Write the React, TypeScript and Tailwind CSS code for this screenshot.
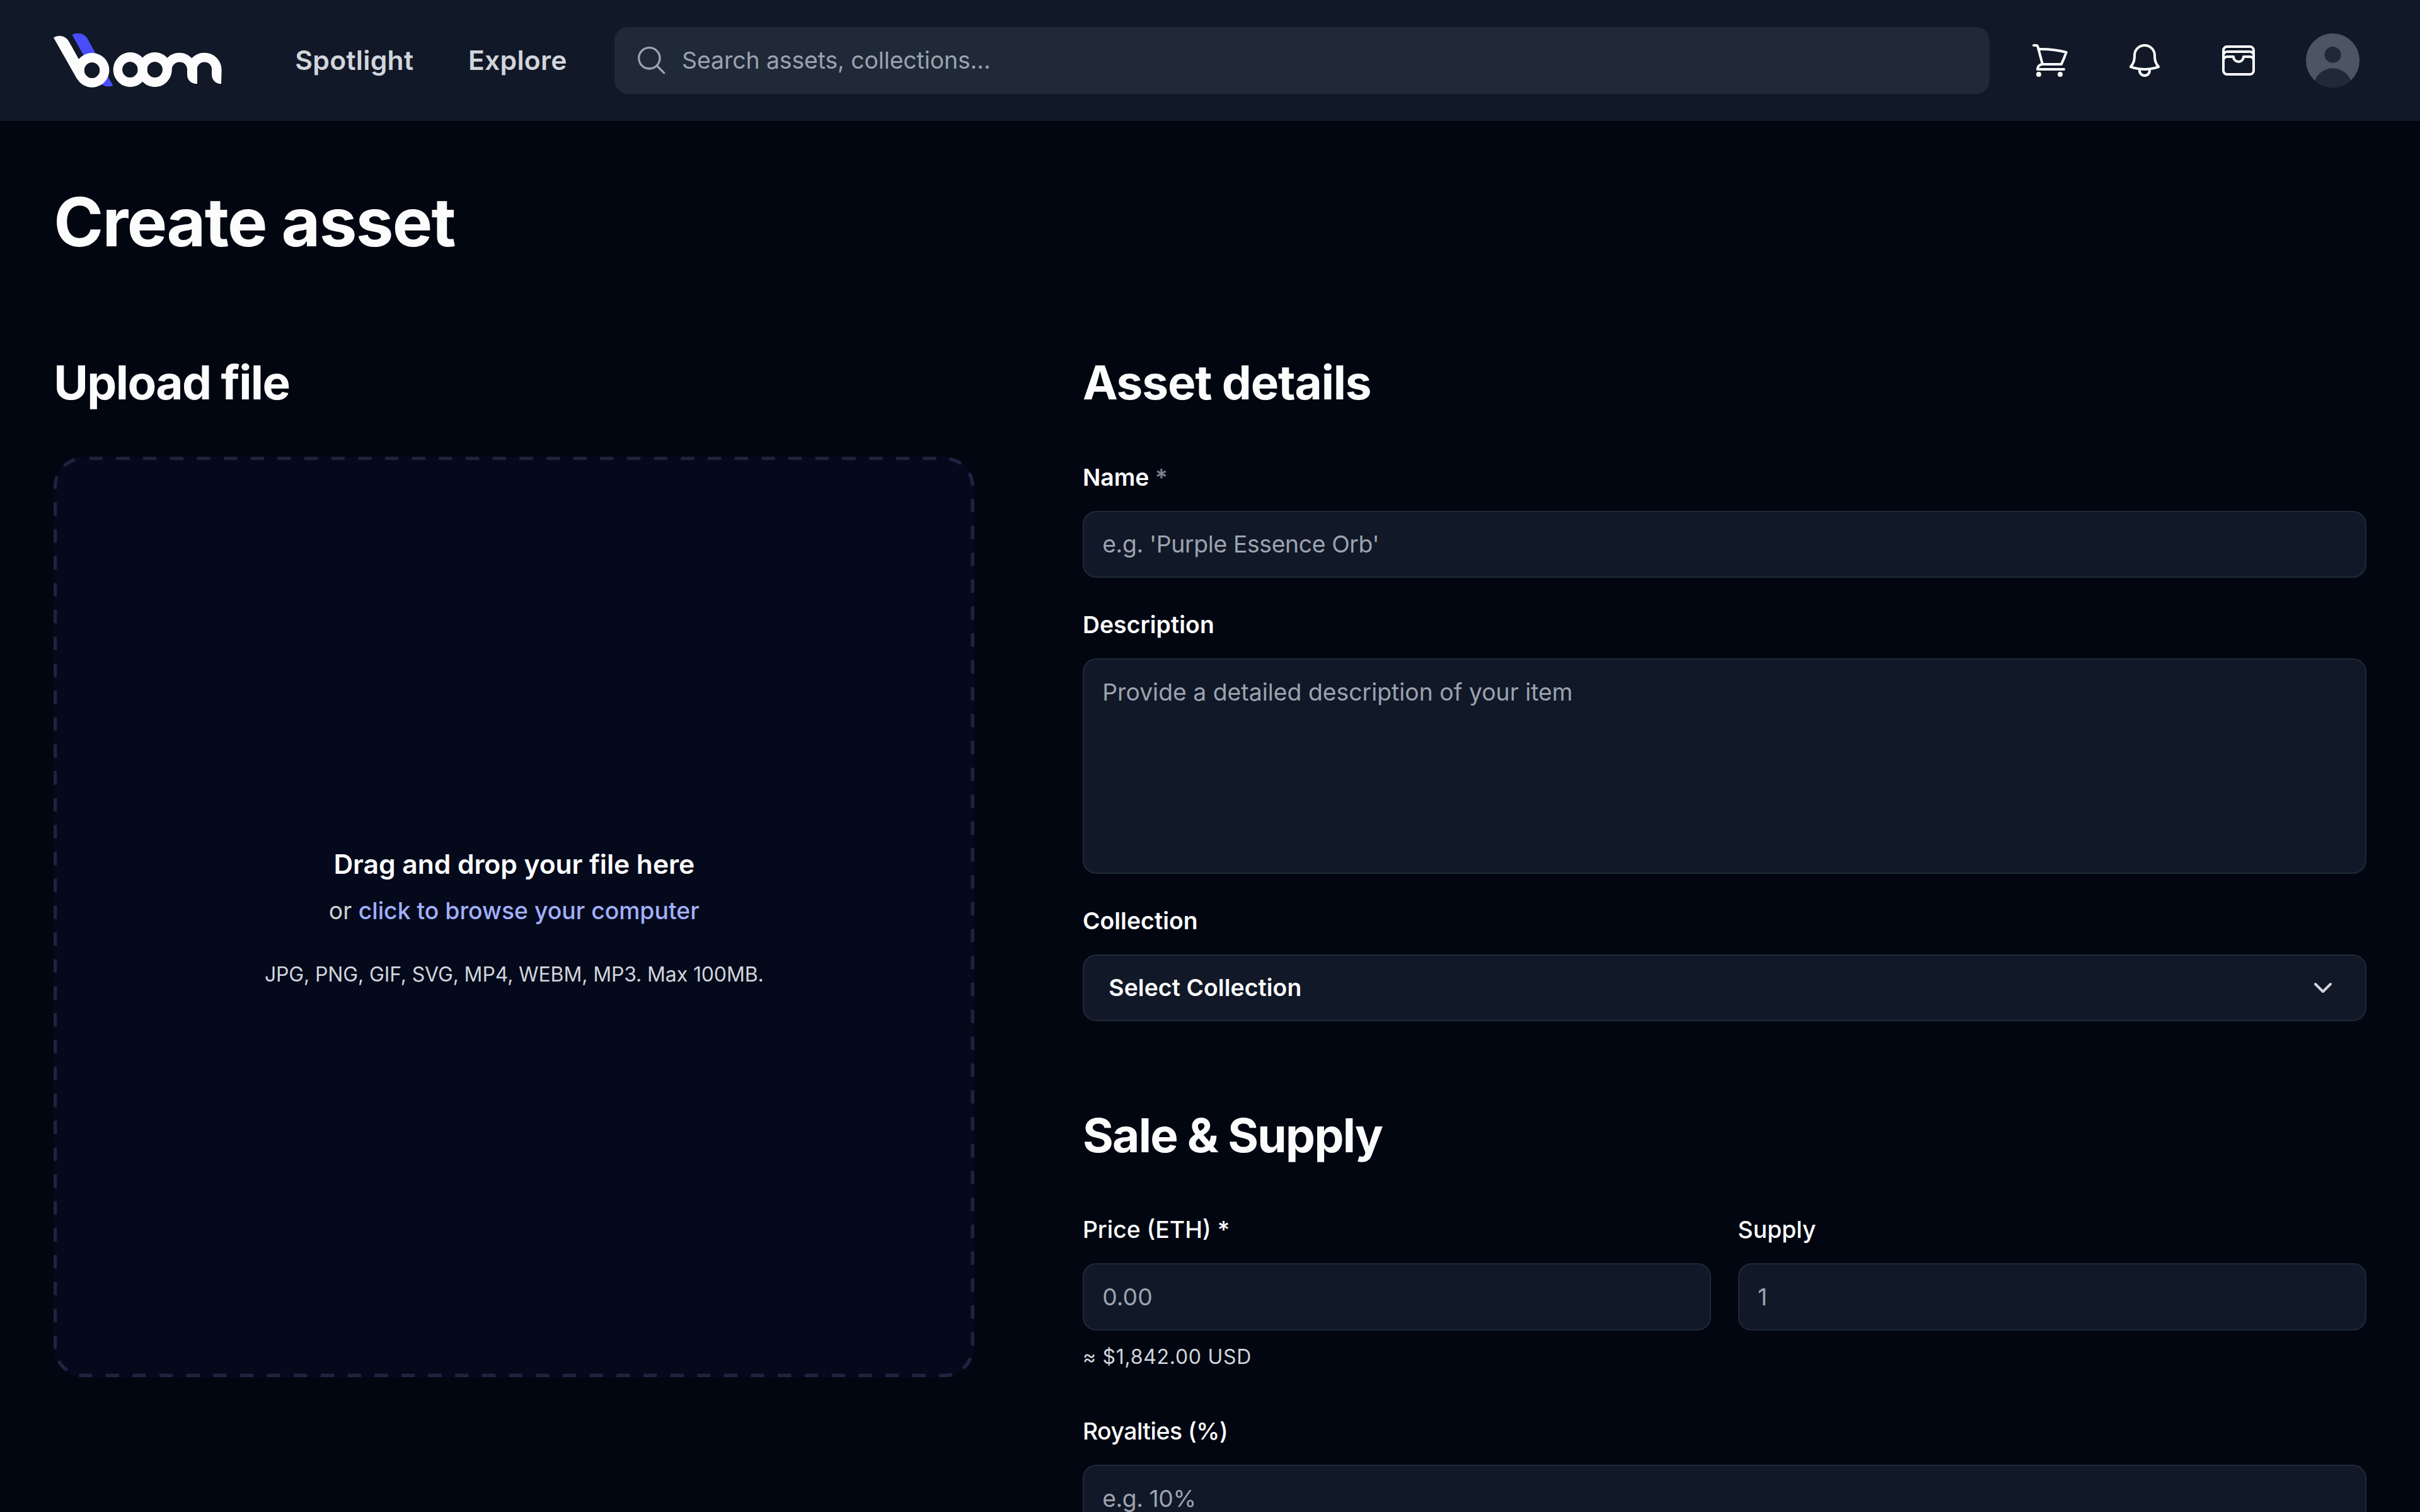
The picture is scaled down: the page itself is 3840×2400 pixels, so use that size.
import { ChevronDown } from "lucide-react";
import {
   HiMagnifyingGlass,
   HiOutlineBell,
   HiOutlineShoppingCart,
   HiOutlineWallet,
} from "react-icons/hi2";

const Logo: React.FC = () => {
   return (
      <svg
         className="h-[32.3px] w-[100px] shrink-0"
         viewBox="76 69 800 258"
         fillRule="evenodd"
      >
         <path
            fill="#4a4dfb"
            d="M164 75C175 70 186 69 196 69C218 70 232 82 243 104L276 164L225 184Z"
         />
         <path fill="#4a4dfb" d="M330 266L359 317C341 325 318 323 300 308Z" />
         <g fill="#fcfcfd">
            <path d="M76 89C86 83 96 81 105 81C126 81 141 92 151 111L197 193L215 230L188 286Z" />
            <path d="M259 162a82 82 0 1 0 0.1 0Z M259 207a37 37.5 0 1 0 0.1 0Z" />
            <path d="M441 159a81 82.5 0 1 0 0.1 0Z M440 204a37 37.5 0 1 0 0.1 0Z" />
            <path d="M558 159a81 82.5 0 1 0 0.1 0Z M558 204a37 37.5 0 1 0 0.1 0Z" />
            <path d="M617 186C632 170 652 161 675 161C698 161 719 170 734 187C750 170 770 161 793 161C840 161 876 197 876 243L874 309C848 309 829 290 829 265V238C829 219 813 205 794 205C776 205 765 217 760 230V309C730 309 712 290 712 265V240C712 219 696 205 675 205C655 205 640 220 638 242L600 250Z" />
         </g>
      </svg>
   );
};

const Avatar: React.FC = () => {
   return (
      <svg className="size-8 rounded-full bg-[#4b5563]" viewBox="0 0 40 40">
         <circle cx="20" cy="15.9" r="6.1" fill="#1f2937" />
         <circle cx="20" cy="40.4" r="14.45" fill="#1f2937" />
      </svg>
   );
};

const Header: React.FC = () => {
   return (
      <header className="flex h-18 items-center bg-[#111827] px-8">
         <Logo />
         <nav className="flex w-[233.8px] shrink-0 items-center pl-[43.6px] text-base font-semibold tracking-[0.1px] text-[#d1d5db]">
            <a className="w-[103px]" href="#">
               Spotlight
            </a>
            <a href="#">Explore</a>
         </nav>
         <div className="mr-4 flex h-10 flex-1 items-center rounded-lg bg-[#1f2937] pl-3">
            <HiMagnifyingGlass className="mr-2 text-[#9ca3af]" size={20} />
            <input
               className="flex-1 text-sm tracking-[-0.03px] outline-none placeholder:text-[#9ca3af]"
               placeholder="Search assets, collections..."
               type="text"
            />
         </div>
         <div className="flex gap-4 text-[#fcfcfd]">
            <button className="flex size-10 items-center justify-center">
               <HiOutlineShoppingCart size={24} />
            </button>
            <button className="flex size-10 items-center justify-center">
               <HiOutlineBell size={24} />
            </button>
            <button className="flex size-10 items-center justify-center">
               <HiOutlineWallet size={24} />
            </button>
            <button className="flex size-10 items-center justify-center">
               <Avatar />
            </button>
         </div>
      </header>
   );
};

interface FieldProps {
   label: React.ReactNode;
   className?: string;
   children: React.ReactNode;
}
const Field: React.FC<FieldProps> = ({ label, className, children }) => {
   return (
      <div className={className}>
         <label className="mb-2.5 block text-sm leading-5 font-medium">
            {label}
         </label>
         {children}
      </div>
   );
};

interface InputProps {
   placeholder: string;
   className?: string;
}
const Input: React.FC<InputProps> = ({ placeholder, className = "" }) => {
   return (
      <input
         className={`block h-10 w-full rounded-lg border border-[#1f2937] bg-[#111827] px-[11px] text-sm outline-none placeholder:text-[#9ca3af] ${className}`}
         placeholder={placeholder}
         type="text"
      />
   );
};

const UploadBox: React.FC = () => {
   return (
      <div className="relative flex aspect-square w-full flex-col items-center justify-center overflow-hidden rounded-[17.6px] bg-[#04091b] text-center">
         <svg className="absolute inset-0 h-full w-full">
            <rect
               width="100%"
               height="100%"
               rx="17.6"
               fill="none"
               stroke="#20223f"
               strokeWidth="4"
               strokeDasharray="8"
               strokeDashoffset="-3.65"
            />
         </svg>
         <p className="text-base leading-6 font-semibold tracking-[-0.03px]">
            Drag and drop your file here
         </p>
         <p className="mt-[4.8px] text-sm leading-[22px] text-[#d1d5db]">
            or{" "}
            <span className="font-medium text-[#a2affc]">
               click to browse your computer
            </span>
         </p>
         <p className="mt-[18px] text-xs leading-[18px] tracking-[-0.05px] text-[#d1d5db]">
            JPG, PNG, GIF, SVG, MP4, WEBM, MP3. Max 100MB.
         </p>
      </div>
   );
};

const App: React.FC = () => {
   return (
      <div className="h-[900px] w-[1440px] overflow-hidden bg-[#020611] font-['Inter',sans-serif] text-[#fcfcfd] [zoom:2.666667]">
         <Header />
         <main className="px-8 pt-[36.5px]">
            <h1 className="mb-[53.2px] text-[40px] leading-12 font-bold tracking-[-0.64px]">
               Create asset
            </h1>

            <div className="flex items-start justify-between">
               <section className="w-[547.8px]">
                  <h2 className="mb-[26.3px] text-[28px] leading-9 font-bold tracking-[-0.61px]">
                     Upload file
                  </h2>
                  <UploadBox />
               </section>

               <section className="w-[763.8px]">
                  <h2 className="mb-[28.3px] text-[28px] leading-9 font-bold tracking-[-0.44px]">
                     Asset details
                  </h2>
                  <Field
                     label={
                        <span className="font-semibold">
                           Name{" "}
                           <span className="text-[#7b808c]">*</span>
                        </span>
                     }
                  >
                     <Input
                        className="tracking-[-0.14px]"
                        placeholder="e.g. 'Purple Essence Orb'"
                     />
                  </Field>
                  <Field
                     className="mt-[18px]"
                     label={
                        <span className="font-semibold tracking-[0.03px]">
                           Description
                        </span>
                     }
                  >
                     <textarea
                        className="block h-32 w-full resize-none rounded-lg border border-[#1f2937] bg-[#111827] px-[11px] py-[9.3px] text-sm leading-5 outline-none placeholder:text-[#9ca3af]"
                        placeholder="Provide a detailed description of your item"
                     />
                  </Field>
                  <Field
                     className="mt-[18px]"
                     label={
                        <span className="font-semibold tracking-[0.03px]">
                           Collection
                        </span>
                     }
                  >
                     <button className="flex h-10 w-full items-center justify-between rounded-lg border border-[#1f2937] bg-[#111827] pr-4 pl-[14.8px] text-sm font-semibold tracking-[0.03px]">
                        Select Collection
                        <ChevronDown className="text-[#d1d5db]" size={18} />
                     </button>
                  </Field>

                  <h2 className="mt-[49.7px] mb-[28.3px] text-[28px] leading-9 font-bold tracking-[-0.65px]">
                     Sale & Supply
                  </h2>
                  <div className="grid grid-cols-2 gap-4">
                     <div>
                        <Field label="Price (ETH) *">
                           <Input placeholder="0.00" />
                        </Field>
                        <p className="mt-2 text-xs tracking-[0.27px] text-[#d1d5db]">
                           ≈ $1,842.00 USD
                        </p>
                     </div>
                     <Field label="Supply">
                        <Input placeholder="1" />
                     </Field>
                  </div>
                  <Field
                     className="mt-[26px]"
                     label={
                        <span className="tracking-[-0.18px]">
                           Royalties (%)
                        </span>
                     }
                  >
                     <Input
                        className="tracking-[-0.17px]"
                        placeholder="e.g. 10%"
                     />
                  </Field>
               </section>
            </div>
         </main>
      </div>
   );
};

export default App;
